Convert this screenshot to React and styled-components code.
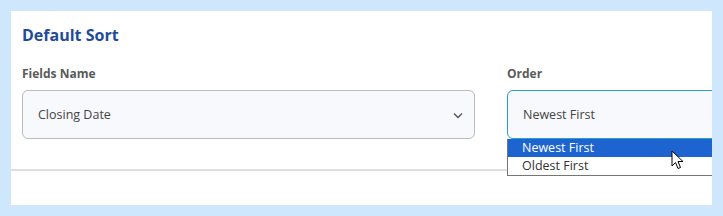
import React from "react";
import styled, { createGlobalStyle } from "styled-components";

const GlobalStyle = createGlobalStyle`
  html, body {
    margin: 0;
    padding: 0;
    background: #cfe7fd;
    font-family: "Open Sans", "Noto Sans", sans-serif;
  }
`;

const Page = styled.div`
  padding: 11px;
  height: 216px;
  box-sizing: border-box;
`;

const Panel = styled.section`
  position: relative;
  background: #ffffff;
  width: 701px;
  height: 194px;
  overflow: hidden;
  box-sizing: border-box;
  padding-top: 14px;
`;

const Title = styled.h2`
  margin: 0 0 0 11px;
  font-size: 16px;
  line-height: 20px;
  font-weight: 700;
  color: #1f4b9b;
`;

const Row = styled.div`
  display: flex;
  gap: 32px;
  margin: 21px 0 0 11px;
`;

const Field = styled.div`
  position: relative;
  flex: 0 0 453px;
  display: flex;
  flex-direction: column;
`;

const Label = styled.label`
  font-size: 12px;
  line-height: 16px;
  font-weight: 700;
  color: #5a5a5a;
  margin-bottom: 8px;
`;

const SelectBox = styled.div`
  height: 49px;
  box-sizing: border-box;
  border: 1px solid ${(p) => (p.$focused ? "#2a9fc9" : "#bcbcbc")};
  border-radius: 6px;
  background: #f7f9fc;
  display: flex;
  align-items: center;
  justify-content: space-between;
  padding: 0 10px 0 15px;
  font-size: 12.5px;
  color: #444;
`;

const Chevron = styled.svg`
  width: 12px;
  height: 12px;
  color: #555;
`;

const Dropdown = styled.ul`
  position: absolute;
  left: 0;
  top: 100%;
  width: 453px;
  margin: 0;
  padding: 0;
  list-style: none;
  background: #fff;
  border: 1px solid #767676;
  border-top: none;
  box-sizing: border-box;
  z-index: 2;
`;

const Option = styled.li`
  height: 18px;
  line-height: 18px;
  padding-left: 14px;
  font-size: 12.5px;
  background: ${(p) => (p.$active ? "#1d64d0" : "#fff")};
  color: ${(p) => (p.$active ? "#fff" : "#333")};
`;

const Divider = styled.hr`
  margin: 30px 0 0 0;
  border: none;
  border-top: 2px solid #dedede;
`;

const Cursor = styled.svg`
  position: absolute;
  left: 660px;
  top: 139px;
  width: 13px;
  height: 20px;
  z-index: 3;
`;

export default function App() {
  return (
    <>
      <GlobalStyle />
      <Page>
        <Panel>
          <Title>Default Sort</Title>
          <Row>
            <Field>
              <Label>Fields Name</Label>
              <SelectBox>
                Closing Date
                <Chevron viewBox="0 0 12 12" fill="none">
                  <path d="M2 4.5 L6 8.5 L10 4.5" stroke="currentColor" strokeWidth="1.4" />
                </Chevron>
              </SelectBox>
            </Field>
            <Field>
              <Label>Order</Label>
              <SelectBox $focused>Newest First</SelectBox>
              <Dropdown>
                <Option $active>Newest First</Option>
                <Option>Oldest First</Option>
              </Dropdown>
            </Field>
          </Row>
          <Divider />
          <Cursor viewBox="0 0 13 20">
            <path
              d="M1 1 L1 16 L4.5 12.5 L7 18.5 L9.5 17.5 L7 11.5 L12 11.5 Z"
              fill="#fff"
              stroke="#000"
              strokeWidth="1"
              strokeLinejoin="round"
            />
          </Cursor>
        </Panel>
      </Page>
    </>
  );
}
